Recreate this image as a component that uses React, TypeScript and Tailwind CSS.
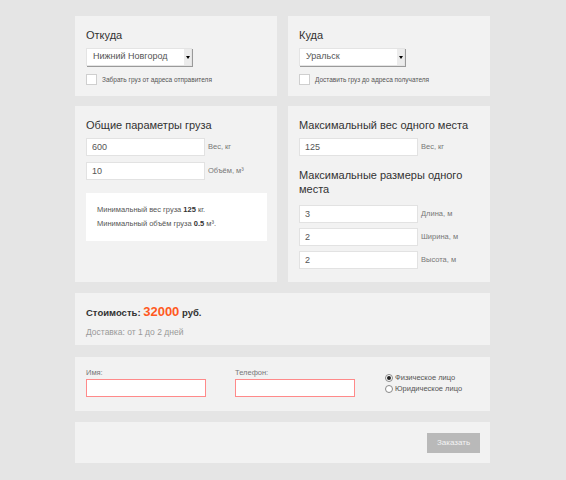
import { useState } from "react";

const inputCls =
  "h-[18px] w-[119px] shrink-0 border border-[#e2e2e2] bg-white pl-[5px] text-[9px] text-[#555] outline-none";

function Field({ value, label }: { value: string; label: string }) {
  return (
    <div className="flex items-center">
      <input className={inputCls} defaultValue={value} />
      <span className="ml-[3px] text-[7.5px] text-[#777]">{label}</span>
    </div>
  );
}

function Select({ value }: { value: string }) {
  return (
    <div className="relative mt-[6px] flex h-[18px] w-[106px] items-center border border-[#e4e4e4] bg-white pl-[6px] text-[9px] text-[#555] shadow-[1px_1px_0_#9a9a9a]">
      <span className="flex-1">{value}</span>
      <div className="flex h-full w-[7px] items-center justify-center bg-[#ececec]">
        <div className="h-0 w-0 border-x-[2px] border-t-[3px] border-x-transparent border-t-black" />
      </div>
    </div>
  );
}

function Check({ label }: { label: string }) {
  return (
    <label className="mt-[8px] flex items-center">
      <span className="h-[11px] w-[11px] border border-[#cfcfcf] bg-white" />
      <span className="ml-[5px] text-[6.5px] text-[#555]">{label}</span>
    </label>
  );
}

const heading = "text-[11px] leading-[14px] text-[#333]";

export default function App() {
  const [person, setPerson] = useState("phys");

  return (
    <div className="min-h-[480px] bg-[#e5e5e5] pt-4 font-['Liberation_Sans',Arial,sans-serif]">
      <div className="ml-[75px] flex w-[415px] flex-col">
        <div className="grid grid-cols-2 gap-[11px]">
          <div className="h-[80px] bg-[#f2f2f2] px-[11px] pt-3">
            <h2 className={heading}>Откуда</h2>
            <Select value="Нижний Новгород" />
            <Check label="Забрать груз от адреса отправителя" />
          </div>
          <div className="h-[80px] bg-[#f2f2f2] px-[11px] pt-3">
            <h2 className={heading}>Куда</h2>
            <Select value="Уральск" />
            <Check label="Доставить груз до адреса получателя" />
          </div>
        </div>

        <div className="mt-[10px] grid grid-cols-2 gap-[11px]">
          <div className="bg-[#f2f2f2] pl-[11px] pr-[10px] pt-3">
            <h2 className={heading}>Общие параметры груза</h2>
            <div className="mt-[6px] flex flex-col gap-[6px]">
              <Field value="600" label="Вес, кг" />
              <Field value="10" label="Объём, м³" />
            </div>
            <div className="mt-[13px] bg-white px-[11px] py-[10px] text-[7.5px] leading-[14px] text-[#555]">
              <p>
                Минимальный вес груза <b className="text-[#333]">125</b> кг.
              </p>
              <p>
                Минимальный объём груза <b className="text-[#333]">0.5</b> м³.
              </p>
            </div>
          </div>
          <div className="bg-[#f2f2f2] px-[11px] pb-[13px] pt-3">
            <h2 className={heading}>Максимальный вес одного места</h2>
            <div className="mt-[6px]">
              <Field value="125" label="Вес, кг" />
            </div>
            <h2 className={`${heading} mt-[12px] w-[170px]`}>
              Максимальные размеры одного места
            </h2>
            <div className="mt-[9px] flex flex-col gap-[5px]">
              <Field value="3" label="Длина, м" />
              <Field value="2" label="Ширина, м" />
              <Field value="2" label="Высота, м" />
            </div>
          </div>
        </div>

        <div className="mt-[11px] h-[52px] bg-[#f2f2f2] px-[11px] pt-[12px]">
          <p className="text-[9.5px] font-bold leading-[14px] text-[#333]">
            Стоимость:{" "}
            <span className="text-[13px] text-[#ff5a1e]">32000</span> руб.
          </p>
          <p className="mt-[5px] text-[8.5px] leading-[14px] text-[#999]">
            Доставка: от 1 до 2 дней
          </p>
        </div>

        <div className="mt-[12px] flex h-[54px] bg-[#f2f2f2] pl-[11px] pt-[11px]">
          <div className="flex flex-col">
            <span className="text-[7.5px] leading-[10px] text-[#777]">Имя:</span>
            <input className="mt-[1px] h-[18px] w-[120px] border border-[#ff8a8a] bg-white outline-none" />
          </div>
          <div className="ml-[29px] flex flex-col">
            <span className="text-[7.5px] leading-[10px] text-[#777]">Телефон:</span>
            <input className="mt-[1px] h-[18px] w-[120px] border border-[#ff8a8a] bg-white outline-none" />
          </div>
          <div className="ml-[30px] mt-[5px] flex flex-col gap-[1px]">
            {[
              ["phys", "Физическое лицо"],
              ["jur", "Юридическое лицо"],
            ].map(([k, t]) => (
              <label
                key={k}
                className="flex items-center text-[7.5px] leading-[10px] text-[#555]"
                onClick={() => setPerson(k)}
              >
                <span className="flex h-[8px] w-[8px] items-center justify-center rounded-full border border-[#888] bg-white">
                  {person === k && <span className="h-[4px] w-[4px] rounded-full bg-[#222]" />}
                </span>
                <span className="ml-[2px]">{t}</span>
              </label>
            ))}
          </div>
        </div>

        <div className="mt-[11px] flex h-[41px] items-center justify-end bg-[#f2f2f2] pr-[10px]">
          <button className="h-[20px] w-[53px] bg-[#b9b9b9] text-[8px] text-[#f4f4f4]">
            Заказать
          </button>
        </div>
      </div>
    </div>
  );
}
